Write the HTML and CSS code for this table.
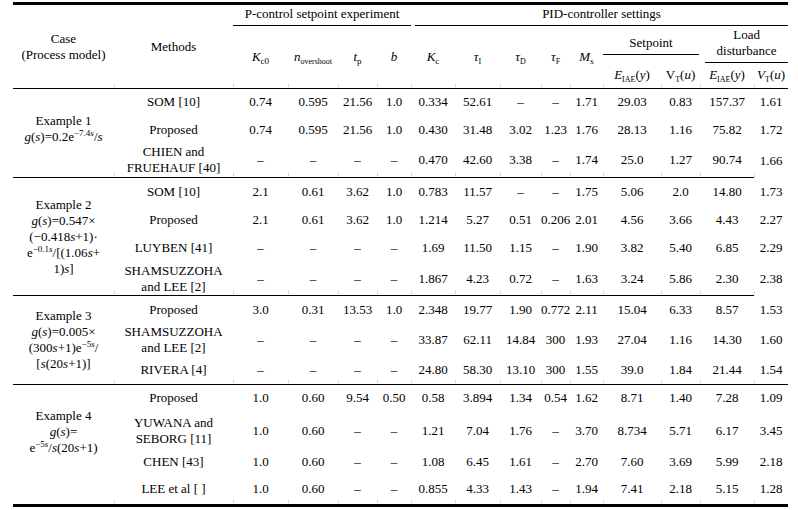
FILE: index.html
```html
<!DOCTYPE html>
<html>
<head>
<meta charset="utf-8">
<link rel="stylesheet" href="styles.css">
</head>
<body>
<table class="tbl">
  <colgroup>
    <col class="c-case"><col class="c-meth"><col class="c-kc0"><col class="c-n"><col class="c-tp"><col class="c-b">
    <col class="c-kc"><col class="c-ti"><col class="c-td"><col class="c-tf"><col class="c-ms">
    <col class="c-e1"><col class="c-v1"><col class="c-e2"><col class="c-v2">
  </colgroup>
  <thead>
    <tr class="h1">
      <th rowspan="3" class="hcase">Case<br>(Process model)</th>
      <th rowspan="3" class="hmeth tick">Methods</th>
      <th colspan="4" class="grp"><div class="ul">P-control setpoint experiment</div></th>
      <th colspan="9" class="grp pid"><div class="ul">PID-controller settings</div></th>
    </tr>
    <tr class="h2">
      <th rowspan="2" class="tick"><i>K</i><sub>c0</sub></th>
      <th rowspan="2" class="tick"><i>n</i><sub class="tiny">overshoot</sub></th>
      <th rowspan="2" class="tick"><i>t</i><sub>p</sub></th>
      <th rowspan="2" class="tick"><i>b</i></th>
      <th rowspan="2" class="tick"><i>K</i><sub>c</sub></th>
      <th rowspan="2" class="tick"><i>τ</i><sub class="sc">I</sub></th>
      <th rowspan="2" class="tick"><i>τ</i><sub class="sc">D</sub></th>
      <th rowspan="2" class="tick"><i>τ</i><sub class="sc">F</sub></th>
      <th rowspan="2" class="tick"><i>M</i><sub>s</sub></th>
      <th colspan="2" class="grp sp"><div class="ul">Setpoint</div></th>
      <th colspan="2" class="grp ld"><div class="ul">Load<br>disturbance</div></th>
    </tr>
    <tr class="h3">
      <th class="tick"><i>E</i><sub class="sc">IAE</sub>(<i>y</i>)</th>
      <th class="tick">V<sub class="sc">T</sub>(<i>u</i>)</th>
      <th class="tick"><i>E</i><sub class="sc">IAE</sub>(<i>y</i>)</th>
      <th class="tick"><i>V</i><sub class="sc">T</sub>(<i>u</i>)</th>
    </tr>
  </thead>

  <tbody class="part">
    <tr class="r27">
      <td rowspan="3" class="case ex1">Example 1<br><i>g</i>(<i>s</i>)=0.2e<sup>−7.4<i>s</i></sup>/<i>s</i></td>
      <td>SOM [10]</td><td>0.74</td><td>0.595</td><td>21.56</td><td>1.0</td>
      <td>0.334</td><td>52.61</td><td>–</td><td>–</td><td>1.71</td><td>29.03</td><td>0.83</td><td>157.37</td><td>1.61</td>
    </tr>
    <tr class="r28">
      <td>Proposed</td><td>0.74</td><td>0.595</td><td>21.56</td><td>1.0</td>
      <td>0.430</td><td>31.48</td><td>3.02</td><td>1.23</td><td>1.76</td><td>28.13</td><td>1.16</td><td>75.82</td><td>1.72</td>
    </tr>
    <tr class="r34">
      <td>CHIEN and<br>FRUEHAUF [40]</td><td>–</td><td>–</td><td>–</td><td>–</td>
      <td>0.470</td><td>42.60</td><td>3.38</td><td>–</td><td>1.74</td><td>25.0</td><td>1.27</td><td>90.74</td><td>1.66</td>
    </tr>
  </tbody>

  <tbody class="part">
    <tr class="r28">
      <td rowspan="4" class="case">Example 2<br><i>g</i>(<i>s</i>)=0.547×<br>(−0.418<i>s</i>+1)·<br>e<sup>−0.1<i>s</i></sup>/[(1.06<i>s</i>+<br>1)<i>s</i>]</td>
      <td>SOM [10]</td><td>2.1</td><td>0.61</td><td>3.62</td><td>1.0</td>
      <td>0.783</td><td>11.57</td><td>–</td><td>–</td><td>1.75</td><td>5.06</td><td>2.0</td><td>14.80</td><td>1.73</td>
    </tr>
    <tr class="r28">
      <td>Proposed</td><td>2.1</td><td>0.61</td><td>3.62</td><td>1.0</td>
      <td>1.214</td><td>5.27</td><td>0.51</td><td>0.206</td><td>2.01</td><td>4.56</td><td>3.66</td><td>4.43</td><td>2.27</td>
    </tr>
    <tr class="r29">
      <td>LUYBEN [41]</td><td>–</td><td>–</td><td>–</td><td>–</td>
      <td>1.69</td><td>11.50</td><td>1.15</td><td>–</td><td>1.90</td><td>3.82</td><td>5.40</td><td>6.85</td><td>2.29</td>
    </tr>
    <tr class="r33">
      <td>SHAMSUZZOHA<br>and LEE [2]</td><td>–</td><td>–</td><td>–</td><td>–</td>
      <td>1.867</td><td>4.23</td><td>0.72</td><td>–</td><td>1.63</td><td>3.24</td><td>5.86</td><td>2.30</td><td>2.38</td>
    </tr>
  </tbody>

  <tbody class="full">
    <tr class="r28">
      <td rowspan="3" class="case">Example 3<br><i>g</i>(<i>s</i>)=0.005×<br>(300<i>s</i>+1)e<sup>−5<i>s</i></sup>/<br>[<i>s</i>(20<i>s</i>+1)]</td>
      <td>Proposed</td><td>3.0</td><td>0.31</td><td>13.53</td><td>1.0</td>
      <td>2.348</td><td>19.77</td><td>1.90</td><td>0.772</td><td>2.11</td><td>15.04</td><td>6.33</td><td>8.57</td><td>1.53</td>
    </tr>
    <tr class="r31">
      <td>SHAMSUZZOHA<br>and LEE [2]</td><td>–</td><td>–</td><td>–</td><td>–</td>
      <td>33.87</td><td>62.11</td><td>14.84</td><td>300</td><td>1.93</td><td>27.04</td><td>1.16</td><td>14.30</td><td>1.60</td>
    </tr>
    <tr class="r29">
      <td>RIVERA [4]</td><td>–</td><td>–</td><td>–</td><td>–</td>
      <td>24.80</td><td>58.30</td><td>13.10</td><td>300</td><td>1.55</td><td>39.0</td><td>1.84</td><td>21.44</td><td>1.54</td>
    </tr>
  </tbody>

  <tbody class="last">
    <tr class="r26">
      <td rowspan="4" class="case ex4">Example 4<br><i>g</i>(<i>s</i>)=<br><span class="tight">e<sup>−5<i>s</i></sup>/<i>s</i>(20<i>s</i>+1)</span></td>
      <td>Proposed</td><td>1.0</td><td>0.60</td><td>9.54</td><td>0.50</td>
      <td>0.58</td><td>3.894</td><td>1.34</td><td>0.54</td><td>1.62</td><td>8.71</td><td>1.40</td><td>7.28</td><td>1.09</td>
    </tr>
    <tr class="r40">
      <td>YUWANA and<br>SEBORG [11]</td><td>1.0</td><td>0.60</td><td>–</td><td>–</td>
      <td>1.21</td><td>7.04</td><td>1.76</td><td>–</td><td>3.70</td><td>8.734</td><td>5.71</td><td>6.17</td><td>3.45</td>
    </tr>
    <tr class="r23">
      <td>CHEN [43]</td><td>1.0</td><td>0.60</td><td>–</td><td>–</td>
      <td>1.08</td><td>6.45</td><td>1.61</td><td>–</td><td>2.70</td><td>7.60</td><td>3.69</td><td>5.99</td><td>2.18</td>
    </tr>
    <tr class="r32">
      <td>LEE et al [ ]</td><td>1.0</td><td>0.60</td><td>–</td><td>–</td>
      <td>0.855</td><td>4.33</td><td>1.43</td><td>–</td><td>1.94</td><td>7.41</td><td>2.18</td><td>5.15</td><td>1.28</td>
    </tr>
  </tbody>
</table>
</body>
</html>
```

FILE: styles.css
```css
html, body {
  margin: 0;
  padding: 0;
  background: #fff;
}

body {
  font-family: "Liberation Serif", "Times New Roman", serif;
  font-size: 13px;
  color: #000;
}

.tbl {
  border-collapse: collapse;
  table-layout: fixed;
  width: 775px;
  margin: 2px 0 0 13px;
  border-top: 3px solid #000;
  border-bottom: 3px solid #000;
}

.tbl th,
.tbl td {
  padding: 0;
  text-align: center;
  vertical-align: middle;
  font-weight: normal;
  line-height: 16px;
  white-space: nowrap;
}

.c-case { width: 101px; }
.c-meth { width: 119px; }
.c-kc0 { width: 55px; }
.c-n { width: 50px; }
.c-tp { width: 39px; }
.c-b { width: 34px; }
.c-kc { width: 44px; }
.c-ti { width: 45px; }
.c-td { width: 41px; }
.c-tf { width: 29px; }
.c-ms { width: 33px; }
.c-e1 { width: 58px; }
.c-v1 { width: 39px; }
.c-e2 { width: 54px; }
.c-v2 { width: 34px; }

thead {
  border-bottom: 1px solid #000;
}

.h1 { height: 23px; }
.h2 { height: 35px; }
.h3 { height: 26px; }

.hcase { line-height: 17px; }

.grp {
  vertical-align: bottom;
}

.grp .ul {
  border-bottom: 1px solid #000;
  padding-bottom: 3px;
}

.pid .ul { margin-left: 4px; }
.sp .ul { margin-left: 0; margin-right: 1px; }
.ld .ul { margin-left: 5px; }

sub {
  font-size: 9px;
  line-height: 0;
  vertical-align: -3px;
}

sub.tiny { font-size: 8px; }
sub.sc { font-size: 8px; }

sup {
  font-size: 9px;
  line-height: 0;
  vertical-align: 5px;
}

.r23 { height: 23px; }
.r26 { height: 26px; }
.r27 { height: 27px; }
.r28 { height: 28px; }
.r29 { height: 29px; }
.r31 { height: 31px; }
.r32 { height: 32px; }
.r33 { height: 33px; }
.r34 { height: 34px; }
.r40 { height: 40px; }

.case {
  line-height: 18px;
}

.case.ex1 { padding-bottom: 8px; }
.case.ex4 { padding-bottom: 26px; }
.tight { display: inline-block; line-height: 14px; }

.part tr:last-child td:not(:last-child),
.part td.case {
  border-bottom: 1px solid #000;
}

.full {
  border-bottom: 1px solid #000;
}

/* faint dotted cell-edge marks just above the rules */
.tick,
tbody tr:last-child td {
  background-image: repeating-linear-gradient(to bottom, #b5b5b5 0 1px, transparent 1px 2px);
  background-size: 1px 4px;
  background-position: left bottom;
  background-repeat: no-repeat;
}

tbody tr:last-child td.case {
  background-image: none;
}
```
